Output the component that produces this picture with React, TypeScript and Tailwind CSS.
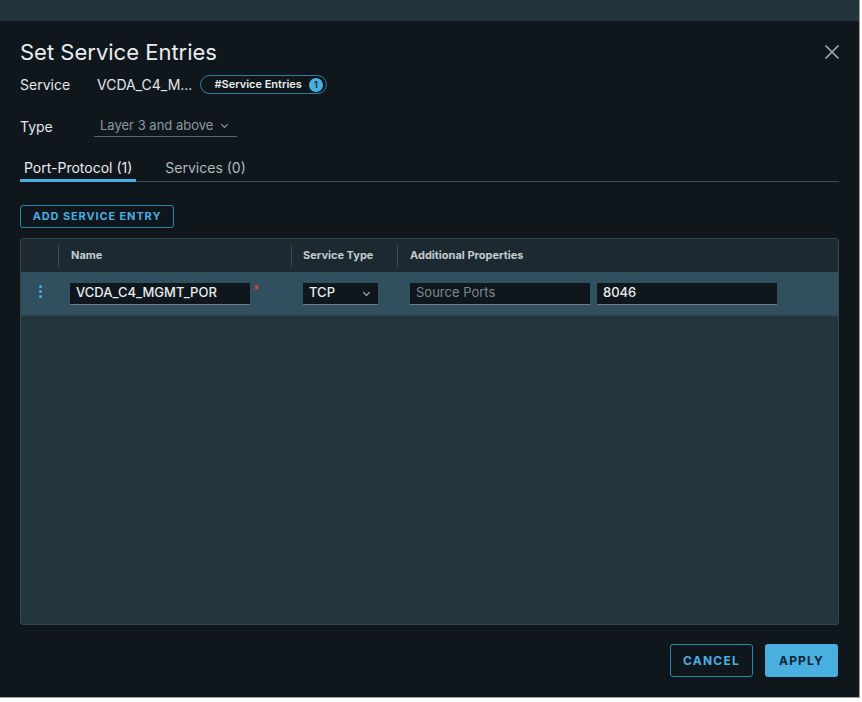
import React, { useState } from "react";

const font = { fontFamily: 'Inter, "Noto Sans", "Liberation Sans", sans-serif' };

const Chevron = ({ className = "" }: { className?: string }) => (
    <svg viewBox="0 0 12 12" className={className} fill="none" stroke="currentColor" strokeWidth="1.3">
        <path d="M2.5 4.5 6 8l3.5-3.5" />
    </svg>
);

export default function App() {
    const [tab, setTab] = useState(0);

    return (
        <div className="h-[702px] w-[862px] bg-white" style={font}>
            <div className="flex h-[698px] w-[860px] flex-col border-b border-r border-[#9aa0a4] bg-[#0f171d]">
                <div className="h-[21px] shrink-0 bg-[#22343c]" />

                <div className="flex flex-1 flex-col px-[20px]">
                    {/* header */}
                    <div className="flex items-center justify-between pt-[16px]">
                        <h2 className="text-[22px] leading-[30px] font-normal text-[#e9ecee]">Set Service Entries</h2>
                        <button className="mr-[-1px] text-[#aab3b8]">
                            <svg viewBox="0 0 16 16" className="h-[16px] w-[16px]" fill="none" stroke="currentColor" strokeWidth="1.5">
                                <path d="M1.5 1.5l13 13M14.5 1.5l-13 13" />
                            </svg>
                        </button>
                    </div>

                    <div className="mt-[7px] flex items-center text-[14px] text-[#e3e6e8]">
                        <span className="w-[77px]">Service</span>
                        <span>VCDA_C4_M...</span>
                        <span className="ml-[8px] flex h-[19px] items-center gap-[7px] rounded-full border border-[#2e7ea3] pr-[3px] pl-[13px] text-[11px] font-semibold text-[#e9ecee]">
                            #Service Entries
                            <span className="flex h-[14px] w-[14px] items-center justify-center rounded-full bg-[#49aee0] text-[9px] text-[#0f2535]">1</span>
                        </span>
                    </div>

                    <div className="mt-[20px] flex items-center text-[14px]">
                        <span className="w-[74px] text-[#e3e6e8]">Type</span>
                        <div className="flex h-[22px] w-[143px] items-center gap-[6px] border-b border-[#5a666d] pl-[6px] text-[13px] text-[#8c979d]">
                            Layer 3 and above
                            <Chevron className="h-[11px] w-[11px]" />
                        </div>
                    </div>

                    {/* tabs */}
                    <div className="mt-[20px] flex border-b border-[#3c4a52] text-[14px]">
                        {["Port-Protocol (1)", "Services (0)"].map((t, i) => (
                            <button
                                key={t}
                                onClick={() => setTab(i)}
                                className={
                                    i === tab
                                        ? "mb-[-1px] mr-[28px] border-b-[3px] border-[#49aee0] px-[4px] pb-[1px] text-[#e9ecee]"
                                        : "mb-[-1px] mr-[28px] border-b-[3px] border-transparent px-[1px] pb-[1px] text-[#aeb7bc]"
                                }
                            >
                                {t}
                            </button>
                        ))}
                    </div>

                    <button className="mt-[23px] h-[23px] w-[154px] rounded-[3px] border border-[#2c86ad] text-[11px] font-bold tracking-[0.08em] text-[#49aee0]">
                        ADD SERVICE ENTRY
                    </button>

                    {/* table */}
                    <div className="mt-[10px] flex h-[387px] flex-col overflow-hidden rounded-[3px] border border-[#35464f] bg-[#23353d]">
                        <div className="flex h-[33px] shrink-0 items-center bg-[#1c2930] text-[11px] font-bold text-[#c3cbcf]">
                            <div className="h-[22px] w-[38px] border-r border-[#3d4c54]" />
                            <div className="flex h-[22px] w-[233px] items-center border-r border-[#3d4c54] pl-[12px]">Name</div>
                            <div className="flex h-[22px] w-[106px] items-center border-r border-[#3d4c54] pl-[11px]">Service Type</div>
                            <div className="flex h-[22px] items-center pl-[12px]">Additional Properties</div>
                        </div>
                        <div className="flex h-[44px] shrink-0 items-center border-b border-[#33434b] bg-[#31505f]">
                            <div className="flex w-[38px] flex-col items-center gap-[2px] pb-[4px]">
                                <span className="h-[3px] w-[3px] rounded-full bg-[#49aee0]" />
                                <span className="h-[3px] w-[3px] rounded-full bg-[#49aee0]" />
                                <span className="h-[3px] w-[3px] rounded-full bg-[#49aee0]" />
                            </div>
                            <div className="relative ml-[11px] flex h-[22px] w-[180px] items-center overflow-hidden border-b border-[#6f7c83] bg-[#0f171d] pl-[6px] text-[13px] font-medium whitespace-nowrap text-[#e9ecee]">
                                VCDA_C4_MGMT_POR
                            </div>
                            <span className="mb-[8px] ml-[3px] text-[12px] leading-none text-[#e0403a]">*</span>
                            <div className="ml-[44px] flex h-[22px] w-[75px] items-center justify-between border-b border-[#6f7c83] bg-[#0f171d] pr-[6px] pl-[6px] text-[13px] font-medium text-[#e9ecee]">
                                TCP
                                <Chevron className="h-[11px] w-[11px] text-[#aab3b8]" />
                            </div>
                            <div className="ml-[32px] flex h-[22px] w-[180px] items-center border-b border-[#6f7c83] bg-[#0f171d] pl-[6px] text-[13px] text-[#7d888e]">
                                Source Ports
                            </div>
                            <div className="ml-[7px] flex h-[22px] w-[180px] items-center border-b border-[#6f7c83] bg-[#0f171d] pl-[6px] text-[13px] font-medium text-[#e9ecee]">
                                8046
                            </div>
                        </div>
                        <div className="flex-1" />
                    </div>

                    {/* footer */}
                    <div className="mt-[19px] flex justify-end gap-[12px] pr-[1px]">
                        <button className="h-[33px] w-[83px] rounded-[3px] border border-[#2c86ad] text-[12px] font-bold tracking-[0.1em] text-[#49aee0]">
                            CANCEL
                        </button>
                        <button className="h-[33px] w-[73px] rounded-[3px] bg-[#49aee0] text-[12px] font-bold tracking-[0.1em] text-[#0f2535]">
                            APPLY
                        </button>
                    </div>
                </div>
            </div>
        </div>
    );
}
